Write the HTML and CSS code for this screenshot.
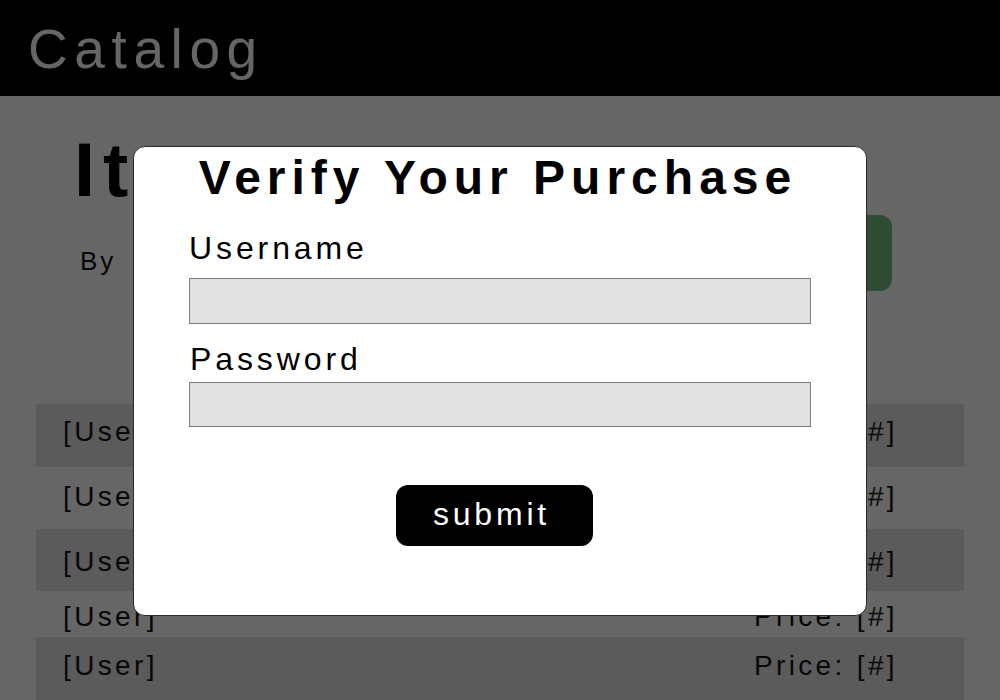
FILE: index.html
```html
<!DOCTYPE html>
<html lang="en">
<head>
<meta charset="utf-8">
<title>Catalog</title>
<link rel="stylesheet" href="styles.css">
</head>
<body>
<header class="topbar">
  <div class="brand">Catalog</div>
</header>
<main class="page">
  <section class="item-head">
    <h1 class="item-title">Item</h1>
    <div class="item-meta">
      <div class="by">By</div>
      <button class="buy" type="button">Buy</button>
    </div>
  </section>
  <ul class="rows">
    <li class="row shade"><span>[User]</span><span>Price: [#]</span></li>
    <li class="row"><span>[User]</span><span>Price: [#]</span></li>
    <li class="row shade"><span>[User]</span><span>Price: [#]</span></li>
    <li class="row"><span>[User]</span><span>Price: [#]</span></li>
    <li class="row shade"><span>[User]</span><span>Price: [#]</span></li>
  </ul>
</main>
<div class="overlay"></div>
<form class="modal">
  <h2 class="modal-title">Verify Your Purchase</h2>
  <label class="field-label label-user" for="u">Username</label>
  <input class="field input-user" id="u" type="text">
  <label class="field-label label-pass" for="p">Password</label>
  <input class="field input-pass" id="p" type="password">
  <button class="submit" type="button">submit</button>
</form>
</body>
</html>
```

FILE: styles.css
```css
* { box-sizing: border-box; }
html, body { margin: 0; padding: 0; }
body {
  width: 1000px;
  height: 700px;
  overflow: hidden;
  background: #ffffff;
  font-family: "Liberation Sans", Arial, sans-serif;
  color: #000;
  position: relative;
}
.topbar {
  height: 96px;
  background: #000;
  padding: 17px 0 0 28px;
}
.brand {
  color: #ffffff;
  font-size: 55px;
  line-height: 64px;
  letter-spacing: 6.6px;
}
.page { padding: 0; }
.item-head {
  padding: 30px 108px 0 74px;
}
.item-title {
  margin: 0;
  font-size: 76px;
  line-height: 88px;
  font-weight: bold;
  letter-spacing: 8px;
}
.item-meta {
  margin-top: 1px;
  display: flex;
  justify-content: space-between;
  align-items: flex-start;
}
.by {
  margin: 31px 0 0 6px;
  font-size: 26px;
  line-height: 30px;
  letter-spacing: 3px;
  color: #111;
}
.buy {
  width: 170px;
  height: 76px;
  border: 0;
  border-radius: 12px;
  background: #73be80;
  color: #fff;
  font-family: inherit;
  font-size: 28px;
}
.rows {
  list-style: none;
  margin: 113px 36px 0 36px;
  padding: 0;
}
.row {
  display: flex;
  justify-content: space-between;
  padding: 12px 66px 19px 27px;
  font-size: 28px;
  line-height: 32px;
  letter-spacing: 3.36px;
  color: #141414;
}
.row.shade { background: #e4e4e4; }
.row:nth-child(2) { padding-top: 14px; padding-bottom: 16px; }
.row:nth-child(3) { padding-top: 17px; padding-bottom: 13px; }
.row:nth-child(4) { padding-top: 10px; padding-bottom: 4px; }
.row:nth-child(5) { padding-top: 13px; padding-bottom: 18px; }

.overlay {
  position: absolute;
  inset: 0;
  background: rgba(0, 0, 0, 0.6);
}
.modal {
  position: absolute;
  left: 133px;
  top: 146px;
  width: 734px;
  height: 470px;
  margin: 0;
  background: #fff;
  border: 1px solid #2a2a2a;
  border-radius: 12px;
  padding: 3px 55px 0 55px;
  display: flex;
  flex-direction: column;
  align-items: stretch;
}
.modal-title {
  margin: 0;
  padding-right: 4px;
  text-align: center;
  font-size: 48px;
  line-height: 56px;
  font-weight: bold;
  letter-spacing: 6px;
}
.field-label {
  display: block;
  font-size: 32px;
  line-height: 36px;
  letter-spacing: 3.9px;
}
.label-user { margin-top: 24px; }
.label-pass { margin-top: 17px; padding-left: 1px; }
.field {
  display: block;
  width: 622px;
  margin: 0;
  background: #e1e1e1;
  border: 1px solid #7c7c7c;
  border-radius: 0;
  padding: 0 8px;
  font-family: inherit;
  font-size: 24px;
}
.input-user { margin-top: 12px; height: 46px; }
.input-pass { margin-top: 5px; height: 45px; }
.submit {
  align-self: flex-start;
  margin: 58px 0 0 207px;
  width: 197px;
  height: 61px;
  padding: 0 6px 3px 0;
  border: 0;
  border-radius: 12px;
  background: #000;
  color: #fff;
  font-family: inherit;
  font-size: 32px;
  line-height: 58px;
  letter-spacing: 3.8px;
  text-align: center;
}
```
